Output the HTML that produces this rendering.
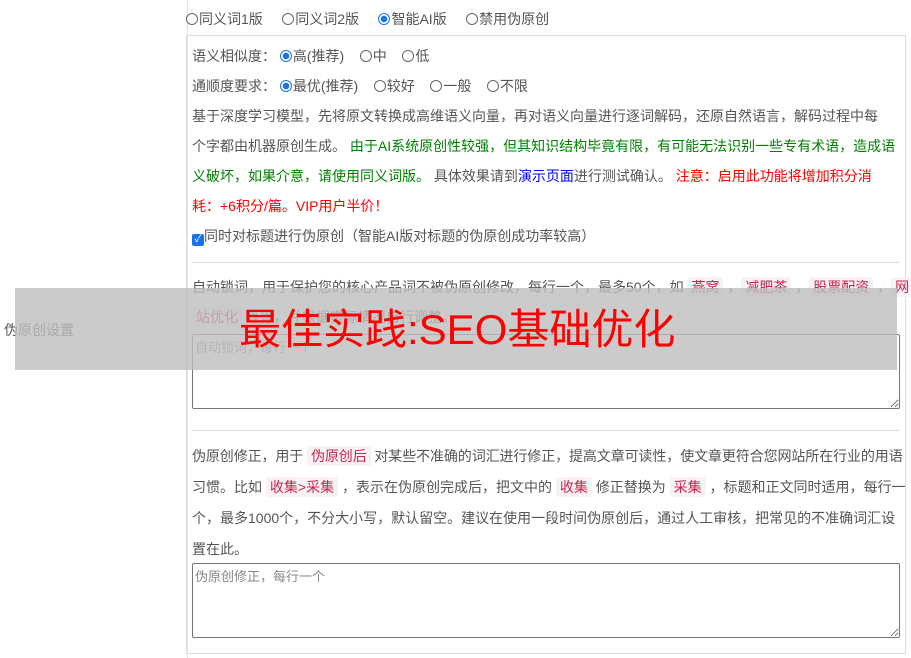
<!DOCTYPE html>
<html><head><meta charset="utf-8"><style>
*{margin:0;padding:0;box-sizing:border-box}
body{width:911px;height:658px;background:#fff;font-family:"Liberation Sans","Noto Sans CJK SC",sans-serif;font-size:14px;color:#555;position:relative;overflow:hidden}
.a{position:absolute;white-space:nowrap;line-height:20px}
.r{display:inline-block;width:12px;height:12px;border:1px solid #666;border-radius:50%;vertical-align:-1px;margin-right:1px;background:#fff}
.r.on{border:1px solid #1a73e8;background:radial-gradient(circle,#1a73e8 0 3px,#fff 3.5px)}
.box{position:absolute;left:186px;top:35px;width:720px;height:619px;border:1px solid #ddd}
.hr{position:absolute;left:192px;width:708px;border-top:1px solid #ddd}
.c{color:#c7254e;background:#f9f2f4;padding:2px 4px;border-radius:3px}
.g{color:green}.b{color:blue}.red{color:red}
textarea{position:absolute;border:1px solid #767676;border-radius:2px;font-family:inherit;font-size:13px;color:#888;padding:2px;resize:both;background:#fff}
</style></head><body>
<div style="position:absolute;left:187px;top:0;height:658px;border-left:1px solid #e5e5e5"></div>
<div class="a" style="left:186px;top:9px"><span class="r"></span>同义词1版 &nbsp; &nbsp; <span class="r"></span>同义词2版 &nbsp; &nbsp; <span class="r on"></span>智能AI版 &nbsp; &nbsp; <span class="r"></span>禁用伪原创</div>
<div class="box"></div>
<div class="a" style="left:192px;top:46px">语义相似度：&nbsp;<span class="r on"></span>高(推荐) &nbsp; &nbsp;<span class="r"></span>中 &nbsp; &nbsp;<span class="r"></span>低</div>
<div class="a" style="left:192px;top:76px">通顺度要求：&nbsp;<span class="r on"></span>最优(推荐) &nbsp; &nbsp;<span class="r"></span>较好 &nbsp; &nbsp;<span class="r"></span>一般 &nbsp; &nbsp;<span class="r"></span>不限</div>
<div class="a" style="left:192px;top:106px">基于深度学习模型，先将原文转换成高维语义向量，再对语义向量进行逐词解码，还原自然语言，解码过程中每</div>
<div class="a" style="left:192px;top:136px">个字都由机器原创生成。 <span class="g">由于AI系统原创性较强，但其知识结构毕竟有限，有可能无法识别一些专有术语，造成语</span></div>
<div class="a" style="left:192px;top:166px"><span class="g">义破坏，如果介意，请使用同义词版。</span> 具体效果请到<span class="b">演示页面</span>进行测试确认。 <span class="red">注意：启用此功能将增加积分消</span></div>
<div class="a" style="left:192px;top:196px"><span class="red">耗：+6积分/篇。VIP用户半价！</span></div>
<div class="a" style="left:192px;top:226px"><span style="display:inline-block;width:12px;height:12px;background:#1a73e8;border-radius:2px;color:#fff;font-size:10px;line-height:12px;text-align:center;vertical-align:-1px">✓</span>同时对标题进行伪原创（智能AI版对标题的伪原创成功率较高）</div>
<div class="hr" style="top:262px"></div>
<div class="a" style="left:192px;top:277px">自动锁词，用于保护您的核心产品词不被伪原创修改，每行一个，最多50个，如 <span class="c">燕窝</span> ，<span class="c">减肥茶</span> ，<span class="c">股票配资</span> ，<span class="c">网</span></div>
<div class="a" style="left:192px;top:307px"><span class="c">站优化</span> 等等，并根据实际情况自行调整。</div>
<textarea style="left:192px;top:334px;width:708px;height:75px">自动锁词，每行一个</textarea>
<div class="hr" style="top:430px"></div>
<div class="a" style="left:192px;top:446px;letter-spacing:-0.1px">伪原创修正，用于 <span class="c">伪原创后</span> 对某些不准确的词汇进行修正，提高文章可读性，使文章更符合您网站所在行业的用语</div>
<div class="a" style="left:192px;top:477px">习惯。比如 <span class="c">收集&gt;采集</span> ，表示在伪原创完成后，把文中的 <span class="c">收集</span> 修正替换为 <span class="c">采集</span> ，标题和正文同时适用，每行一</div>
<div class="a" style="left:192px;top:508px">个，最多1000个，不分大小写，默认留空。建议在使用一段时间伪原创后，通过人工审核，把常见的不准确词汇设</div>
<div class="a" style="left:192px;top:539px">置在此。</div>
<textarea style="left:192px;top:563px;width:708px;height:75px">伪原创修正，每行一个</textarea>
<div class="a" style="left:4px;top:320px">伪原创设置</div>
<div style="position:absolute;left:15px;top:288px;width:882px;height:82px;background:rgba(190,190,190,0.8)"></div>
<div class="a" style="left:239px;top:306px;font-size:42px;line-height:48px;color:red">最佳实践:SEO基础优化</div>
</body></html>
